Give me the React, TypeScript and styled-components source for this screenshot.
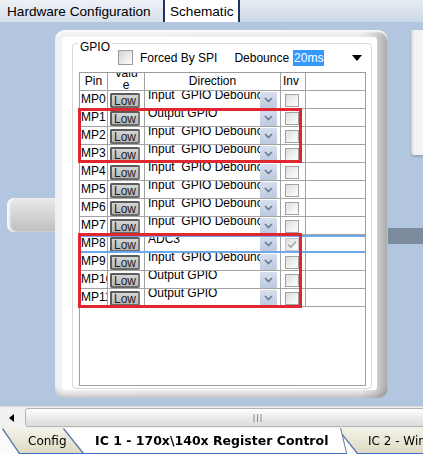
import React from "react";
import styled, { createGlobalStyle } from "styled-components";

const GlobalStyle = createGlobalStyle`
  html, body { margin: 0; padding: 0; }
  body {
    width: 423px;
    height: 454px;
    overflow: hidden;
    background: #b3c6e0;
    font-family: "Liberation Sans", Arial, sans-serif;
  }
`;

const Screen = styled.div`
  width: 423px;
  height: 454px;
  display: flex;
  flex-direction: column;
  overflow: hidden;
`;

/* ---------- top document tabs ---------- */
const TopStrip = styled.div`
  flex: 0 0 22px;
  display: flex;
  align-items: stretch;
  background: linear-gradient(#e6ecf3, #cdd9e8);
`;

const TopTab = styled.div<{ $active?: boolean }>`
  display: flex;
  align-items: center;
  box-sizing: border-box;
  font: 13.6px "Liberation Sans", Arial, sans-serif;
  color: #000;
  ${(p) =>
    p.$active
      ? `background:#fff; border-left:2px solid #1f355f; border-right:2px solid #1f355f; padding:0 5px 0 5px;`
      : `width:163px; padding-left:7px; background:linear-gradient(#eef2f7,#d6dfea);`}
`;

/* ---------- canvas ---------- */
const Workspace = styled.div`
  position: relative;
  flex: 1;
  background: #b3c6e0;
  padding: 8px 0 0 55px;
  overflow: hidden;
`;

const SideBlock = styled.div`
  position: absolute;
  left: 7px;
  top: 176px;
  width: 56px;
  height: 34px;
  border-radius: 7px 2px 2px 7px;
  background: linear-gradient(#e9e9e9, #d2d2d2 55%, #bebebe);
  box-shadow: inset 3px 0 2px #f7f7f7;
`;

const RightBlock = styled.div`
  position: absolute;
  left: 411px;
  top: 8px;
  width: 20px;
  height: 125px;
  border-bottom-left-radius: 4px;
  background: linear-gradient(90deg, #cfcfcf, #f1f1f1 3px, #f8f8f8);
  box-shadow: 0 2px 2px rgba(0, 0, 0, 0.15);
`;

const Connector = styled.div`
  position: absolute;
  left: 386px;
  top: 206px;
  width: 40px;
  height: 16px;
  background: #7c8b9d;
`;

const PanelFrame = styled.div`
  position: relative;
  z-index: 1;
  width: 333px;
  height: 368px;
  box-sizing: border-box;
  padding: 7px 11px 8px 7px;
  border-radius: 10px;
  display: flex;
  background: linear-gradient(90deg, #f3f3f3, #ececec 92%, #d6d6d6 96%, #a9a9a9);
  box-shadow: inset 0 -7px 6px -4px rgba(0, 0, 0, 0.22),
    inset 0 2px 2px #fafafa;
`;

const PanelInner = styled.div`
  flex: 1;
  display: flex;
  background: #fff;
  border-radius: 3px;
  padding: 6px 5px 1px 10px;
`;

const GroupBox = styled.div`
  position: relative;
  flex: 1;
  display: flex;
  flex-direction: column;
  gap: 6px;
  border: 1px solid #d9d9d9;
  border-radius: 4px;
  padding: 5px 5px 2px 6px;
`;

const GroupLabel = styled.span`
  position: absolute;
  left: 5px;
  top: -4px;
  padding: 0 2px;
  background: #fff;
  font: 12px/14px "Liberation Sans", Arial, sans-serif;
  color: #000;
`;

const OptionsRow = styled.div`
  height: 17px;
  display: flex;
  align-items: center;
  padding-left: 39px;
  font: 12px "Liberation Sans", Arial, sans-serif;
  color: #000;
`;

const BigCheck = styled.span`
  width: 15px;
  height: 15px;
  box-sizing: border-box;
  border: 1px solid #9c9c9c;
  background: linear-gradient(135deg, #d2d2d2, #f2f2f2 70%, #fafafa);
`;

const OptionText = styled.span<{ $gap: number }>`
  margin-left: ${(p) => p.$gap}px;
  white-space: nowrap;
`;

const Combo = styled.div`
  flex: 1;
  margin-left: 4px;
  height: 17px;
  display: flex;
  align-items: center;
  background: #fff;
`;

const Selected = styled.span`
  background: #3399ff;
  color: #fff;
  padding: 0 1px;
  line-height: 16px;
`;

const ComboArrow = styled.svg`
  margin-left: auto;
  margin-right: 4px;
`;

/* ---------- grid ---------- */
const Table = styled.div`
  position: relative;
  height: 314px;
  box-sizing: border-box;
  border: 1px solid #9d9d9d;
  background: #fff;
`;

const Row = styled.div<{ $selected?: boolean }>`
  position: relative;
  display: grid;
  grid-template-columns: 28px 37px 136px 25px 1fr;
  height: 18px;
  box-sizing: border-box;
  border-bottom: ${(p) => (p.$selected ? "2px solid #6fa8ea" : "1px solid #a3a3a3")};
  font: 12px "Liberation Sans", Arial, sans-serif;
  color: #000;
  &::before {
    content: "";
    display: ${(p) => (p.$selected ? "block" : "none")};
    position: absolute;
    left: 0;
    right: 0;
    top: 0;
    height: 2px;
    background: #6fa8ea;
    z-index: 1;
  }
`;

const Cell = styled.div<{ $align?: string }>`
  position: relative;
  display: flex;
  justify-content: ${(p) => p.$align || "flex-start"};
  border-right: 1px solid #a3a3a3;
  overflow: hidden;
  white-space: nowrap;
  &:last-child {
    border-right: none;
  }
`;

const HeaderText = styled.span<{ $pad?: number }>`
  line-height: 17px;
  padding-left: ${(p) => p.$pad || 0}px;
`;

const WrappedHeader = styled.span`
  margin-top: -6px;
  line-height: 12px;
  text-align: center;
  width: 100%;
`;

const PinText = styled.span`
  padding-left: 1px;
  line-height: 17px;
`;

const LowButton = styled.span`
  margin: 2px 0 0 2px;
  width: 30px;
  height: 15px;
  box-sizing: border-box;
  border: 2px solid #5c5c5c;
  border-right-color: #7a7a7a;
  border-bottom-color: #6a6a6a;
  border-radius: 2px;
  background: linear-gradient(#d6d6d6, #b6b6b6);
  display: flex;
  align-items: center;
  justify-content: center;
  font: 12px/10px "Liberation Sans", Arial, sans-serif;
  color: #1e1e1e;
`;

const DirectionText = styled.span`
  flex: 1;
  padding-left: 3px;
  margin-top: -4px;
  line-height: 17px;
  white-space: pre;
  overflow: hidden;
`;

const DropButton = styled.span`
  flex: 0 0 17px;
  margin: 1px 3px 0 0;
  display: flex;
  align-items: center;
  justify-content: center;
  background: linear-gradient(#d7dfed, #bccadf);
  border-radius: 1px;
`;

const SmallCheck = styled.span<{ $disabled?: boolean }>`
  margin: 3px 0 0 4px;
  width: 14px;
  height: 13px;
  box-sizing: border-box;
  border: 1px solid ${(p) => (p.$disabled ? "#c6c6c6" : "#a2a2a2")};
  background: linear-gradient(135deg, #dcdcdc, #f6f6f6 70%, #fbfbfb);
  display: flex;
  align-items: center;
  justify-content: center;
`;

const Highlight = styled.div<{ $top: number; $height: number }>`
  position: absolute;
  left: -2px;
  width: 224px;
  top: ${(p) => p.$top}px;
  height: ${(p) => p.$height}px;
  box-sizing: border-box;
  border: 3px solid #e0262e;
  z-index: 2;
  pointer-events: none;
`;

/* ---------- scrollbar ---------- */
const HScroll = styled.div`
  flex: 0 0 22px;
  box-sizing: border-box;
  display: flex;
  align-items: center;
  gap: 3px;
  background: #f1f1ef;
  border-top: 1px solid #d6d6d6;
  overflow: hidden;
`;

const ScrollArrow = styled.div`
  flex: 0 0 22px;
  height: 20px;
  display: flex;
  align-items: center;
  justify-content: center;
`;

const Thumb = styled.div`
  flex: 0 0 465px;
  height: 19px;
  box-sizing: border-box;
  border: 1px solid #b3b3b3;
  border-radius: 3px;
  background: linear-gradient(#fdfdfd, #eaeaea 55%, #dcdcdc);
  display: flex;
  align-items: center;
  justify-content: center;
`;

/* ---------- sheet tabs ---------- */
const SheetTabs = styled.div`
  flex: 0 0 26px;
  display: flex;
  background: #fbfbf9;
  padding-left: 2px;
  overflow: hidden;
`;

const SheetTabOutline = styled.div<{ $width: number; $offset: number; $active?: boolean }>`
  flex: 0 0 ${(p) => p.$width}px;
  margin-left: ${(p) => p.$offset}px;
  height: 25px;
  z-index: ${(p) => (p.$active ? 2 : 1)};
  filter: drop-shadow(1px 0 0 #72869f) drop-shadow(-1px 0 0 #72869f)
    drop-shadow(0 1px 0 #3d6cc2);
`;

const SheetTabFace = styled.div<{ $shape: string; $active?: boolean; $pad: number }>`
  height: 100%;
  clip-path: ${(p) => p.$shape};
  background: ${(p) => (p.$active ? "#ffffff" : "linear-gradient(#f4f2e8, #dedac2)")};
  display: flex;
  align-items: center;
  padding-left: ${(p) => p.$pad}px;
  font: ${(p) => (p.$active ? "bold 12.5px" : "12px")} "DejaVu Sans", Tahoma, sans-serif;
  color: #000;
  white-space: nowrap;
`;

type Pin = { pin: string; dir: string; selected?: boolean; checked?: boolean };

const INPUT = "Input  GPIO Debounc";
const OUTPUT = "Output GPIO";

const pins: Pin[] = [
  { pin: "MP0", dir: INPUT },
  { pin: "MP1", dir: OUTPUT },
  { pin: "MP2", dir: INPUT },
  { pin: "MP3", dir: INPUT },
  { pin: "MP4", dir: INPUT },
  { pin: "MP5", dir: INPUT },
  { pin: "MP6", dir: INPUT },
  { pin: "MP7", dir: INPUT },
  { pin: "MP8", dir: "ADC3", selected: true, checked: true },
  { pin: "MP9", dir: INPUT },
  { pin: "MP10", dir: OUTPUT },
  { pin: "MP11", dir: OUTPUT },
];

const Chevron = () => (
  <svg width="11" height="8" viewBox="0 0 11 8">
    <path d="M2 2 L5.5 5.5 L9 2" fill="none" stroke="#6c7c98" strokeWidth="1.7" />
  </svg>
);

const CheckMark = () => (
  <svg width="10" height="9" viewBox="0 0 10 9">
    <path d="M1 4.5 L3.8 7.2 L9 1.5" fill="none" stroke="#a9a9a9" strokeWidth="1.7" />
  </svg>
);

export default function App() {
  return (
    <>
      <GlobalStyle />
      <Screen>
        <TopStrip>
          <TopTab>Hardware Configuration</TopTab>
          <TopTab $active>Schematic</TopTab>
        </TopStrip>

        <Workspace>
          <SideBlock />
          <RightBlock />
          <Connector />
          <PanelFrame>
            <PanelInner>
              <GroupBox>
                <GroupLabel>GPIO</GroupLabel>
                <OptionsRow>
                  <BigCheck />
                  <OptionText $gap={7}>Forced By SPI</OptionText>
                  <OptionText $gap={17}>Debounce</OptionText>
                  <Combo>
                    <Selected>20ms</Selected>
                    <ComboArrow width="10" height="6" viewBox="0 0 10 6">
                      <path d="M0 0 H10 L5 6 Z" fill="#000" />
                    </ComboArrow>
                  </Combo>
                </OptionsRow>
                <Table>
                  <Row>
                    <Cell $align="center">
                      <HeaderText>Pin</HeaderText>
                    </Cell>
                    <Cell>
                      <WrappedHeader>
                        Valu
                        <br />e
                      </WrappedHeader>
                    </Cell>
                    <Cell $align="center">
                      <HeaderText>Direction</HeaderText>
                    </Cell>
                    <Cell>
                      <HeaderText $pad={2}>Inv</HeaderText>
                    </Cell>
                    <Cell />
                  </Row>
                  {pins.map((p) => (
                    <Row key={p.pin} $selected={p.selected}>
                      <Cell>
                        <PinText>{p.pin}</PinText>
                      </Cell>
                      <Cell>
                        <LowButton>Low</LowButton>
                      </Cell>
                      <Cell>
                        <DirectionText>{p.dir}</DirectionText>
                        <DropButton>
                          <Chevron />
                        </DropButton>
                      </Cell>
                      <Cell>
                        <SmallCheck $disabled={p.checked}>{p.checked && <CheckMark />}</SmallCheck>
                      </Cell>
                      <Cell />
                    </Row>
                  ))}
                  <Highlight $top={35} $height={55} />
                  <Highlight $top={160} $height={75} />
                </Table>
              </GroupBox>
            </PanelInner>
          </PanelFrame>
        </Workspace>

        <HScroll>
          <ScrollArrow>
            <svg width="5" height="8" viewBox="0 0 5 8">
              <path d="M5 0 V8 L0 4 Z" fill="#000" />
            </svg>
          </ScrollArrow>
          <Thumb>
            <svg width="9" height="8" viewBox="0 0 9 8">
              <path d="M1 0 V8 M4.5 0 V8 M8 0 V8" stroke="#8a8a8a" strokeWidth="1" />
            </svg>
          </Thumb>
        </HScroll>

        <SheetTabs>
          <SheetTabOutline $width={90} $offset={0}>
            <SheetTabFace $shape="polygon(1px 0, 88px 0, 90px 100%, 18px 100%)" $pad={26}>
              Config
            </SheetTabFace>
          </SheetTabOutline>
          <SheetTabOutline $width={288} $offset={-28} $active>
            <SheetTabFace
              $active
              $shape="polygon(0 0, 276px 0, 282px 100%, 20px 100%)"
              $pad={31}
            >
              IC 1 - 170x\140x Register Control
            </SheetTabFace>
          </SheetTabOutline>
          <SheetTabOutline $width={150} $offset={-14}>
            <SheetTabFace $shape="polygon(0 0, 100% 0, 100% 100%, 20px 100%)" $pad={30}>
              IC 2 - Wir
            </SheetTabFace>
          </SheetTabOutline>
        </SheetTabs>
      </Screen>
    </>
  );
}
